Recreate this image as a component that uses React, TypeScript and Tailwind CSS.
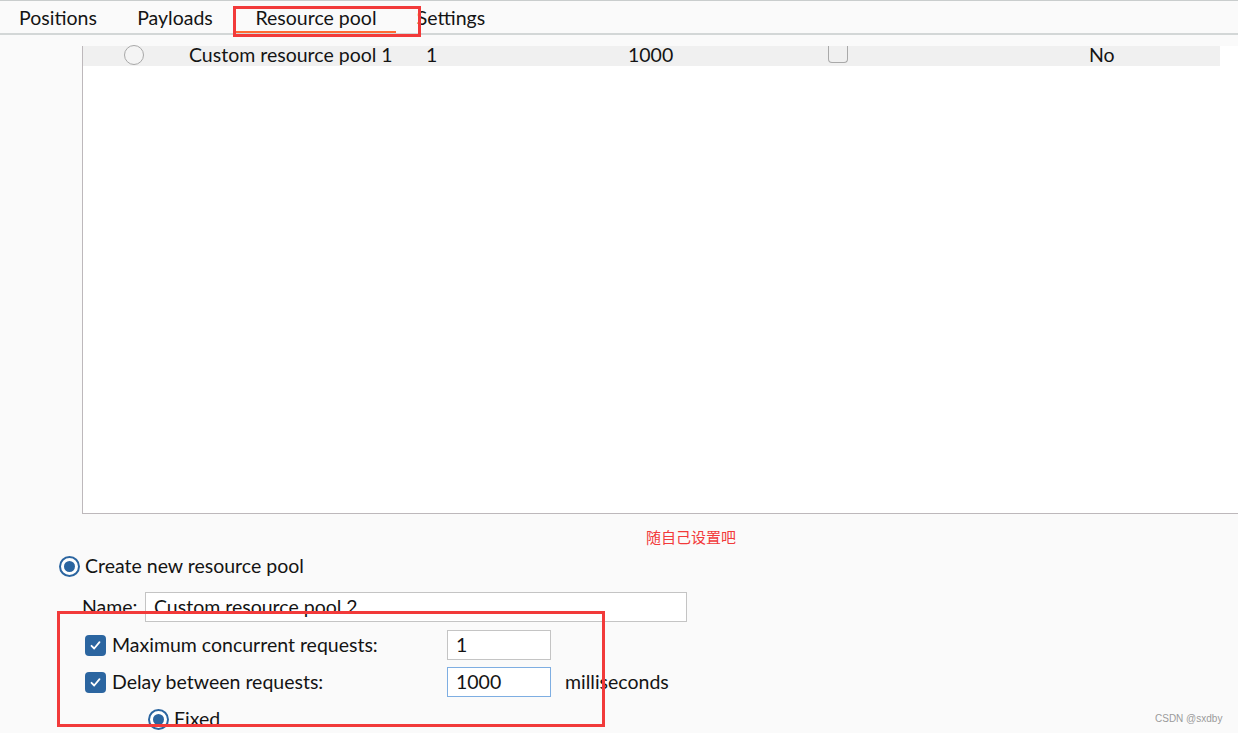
import React from "react";

const font = { fontFamily: "Lato, 'Noto Sans', sans-serif" };

function Check() {
  return (
    <div className="w-[21px] h-[21px] rounded-[4px] bg-[#2b65a0] flex items-center justify-center">
      <svg width="13" height="13" viewBox="0 0 13 13">
        <path d="M2.5 6.8 L5.2 9.5 L10.5 3.2" stroke="white" strokeWidth="1.8" fill="none" strokeLinecap="round" strokeLinejoin="round" />
      </svg>
    </div>
  );
}

function RadioOn() {
  return (
    <div className="w-[21px] h-[21px] rounded-full border-[2.5px] border-[#2b65a0] bg-white flex items-center justify-center">
      <div className="w-[11px] h-[11px] rounded-full bg-[#2b65a0]" />
    </div>
  );
}

export default function App() {
  return (
    <div
      className="w-[1238px] h-[733px] bg-[#fafafa] overflow-hidden relative text-[19.5px] text-[#141414]"
      style={font}
    >
      {/* tab bar */}
      <div className="h-[35px] border-t border-t-[#c9cdcd] border-b-2 border-b-[#d3d7d7] flex items-stretch">
        <div className="w-[116px] flex items-center justify-center pt-[2px]">Positions</div>
        <div className="w-[118px] flex items-center justify-center pt-[2px]">Payloads</div>
        <div className="ml-[2px] w-[160px] flex items-center justify-center pt-[2px] relative">
          Resource pool
          <div className="absolute left-0 right-0 bottom-0 h-[2px] bg-[#ff6a33]" />
        </div>
        <div className="w-[110px] flex items-center justify-center pt-[2px]">Settings</div>
      </div>

      {/* table */}
      <div className="ml-[82px] mt-[11px] h-[468px] border-l border-b border-[#bdb8bb] bg-white">
        <div className="w-[1137px] h-[20px] bg-[#f0f0f0] flex items-center">
          <div className="w-[106px] h-full relative">
            <div className="absolute left-[41px] top-[-1px] w-[20px] h-[20px] rounded-full border-[1.5px] border-[#a8a8a8] bg-[#f4f4f4]" />
          </div>
          <div className="w-[237px] -mt-[3px]">Custom resource pool 1</div>
          <div className="w-[202px] -mt-[3px]">1</div>
          <div className="w-[200px] -mt-[3px]">1000</div>
          <div className="w-[261px] h-full relative">
            <div className="absolute left-0 top-0 w-[20px] h-[17px] border border-t-0 border-[#a9a9a9] rounded-b-[4px]" />
          </div>
          <div className="-mt-[3px]">No</div>
        </div>
      </div>

      {/* annotation */}
      <div className="mt-[13px] h-[20px] pl-[646px] flex items-center text-[15px] text-[#f23a3a]" style={{ fontFamily: "'Noto Sans CJK SC', sans-serif" }}>
        随自己设置吧
      </div>

      <div className="mt-[8px] h-[22px] pl-[59px] flex items-center">
        <RadioOn />
        <span className="ml-[5px]">Create new resource pool</span>
      </div>

      <div className="mt-[15px] h-[30px] pl-[82px] flex items-center">
        <span className="w-[63px]">Name:</span>
        <div className="w-[542px] h-[30px] border border-[#c4c4c4] bg-white flex items-center pl-[8px]">
          Custom resource pool 2
        </div>
      </div>

      <div className="mt-[8px] h-[30px] pl-[85px] flex items-center">
        <Check />
        <span className="ml-[6px] w-[335px]">Maximum concurrent requests:</span>
        <div className="w-[104px] h-[30px] border border-[#c4c4c4] bg-white flex items-center pl-[8px]">1</div>
      </div>

      <div className="mt-[7px] h-[30px] pl-[85px] flex items-center">
        <Check />
        <span className="ml-[6px] w-[335px]">Delay between requests:</span>
        <div className="w-[104px] h-[30px] border border-[#7eaee2] bg-white flex items-center pl-[8px]">1000</div>
        <span className="ml-[14px]">milliseconds</span>
      </div>

      <div className="mt-[11px] h-[22px] pl-[148px] flex items-center">
        <RadioOn />
        <span className="ml-[5px]">Fixed</span>
      </div>

      {/* red annotation boxes */}
      <div className="absolute left-[233px] top-[6px] w-[188px] h-[31px] border-[3px] border-[#f23a3a]" />
      <div className="absolute left-[57px] top-[611px] w-[548px] h-[116px] border-[3px] border-[#f23a3a]" />

      <div className="absolute left-[1155px] top-[711px] text-[10px] text-[#9a9a9a]" style={{ fontFamily: "'Liberation Sans', sans-serif" }}>
        CSDN @sxdby
      </div>
    </div>
  );
}
